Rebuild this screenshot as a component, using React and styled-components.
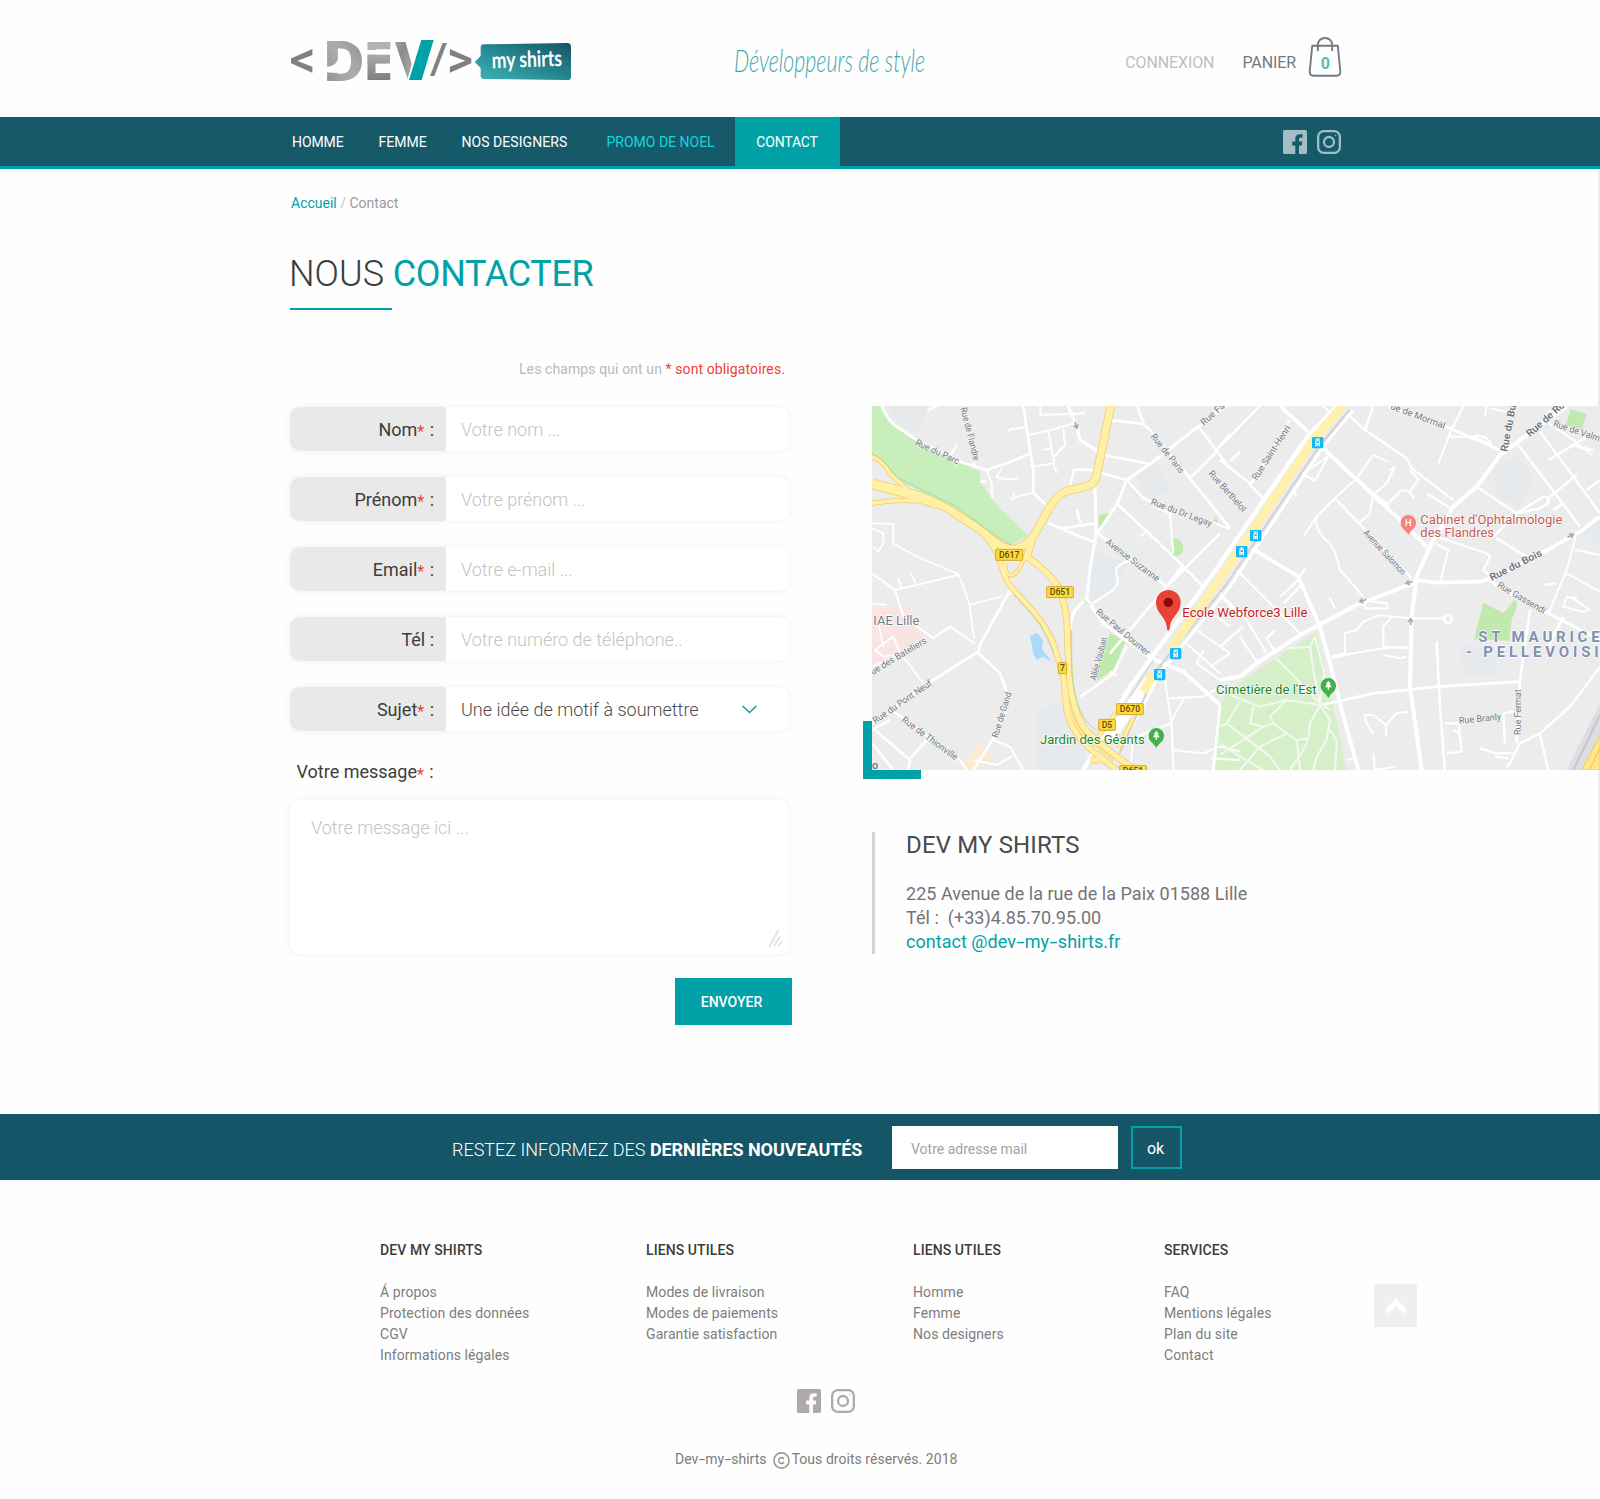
import React from "react";
import styled, { createGlobalStyle } from "styled-components";

const teal = "#00a2a7";
const navy = "#165a6a";

const GlobalStyle = createGlobalStyle`
  *, *::before { box-sizing: border-box; }
  body {
    margin: 0;
    background: #fefefe;
    font-family: Roboto, "Liberation Sans", sans-serif;
    font-size: 14px;
    line-height: 21px;
    color: #3c3c3c;
  }
  a { color: inherit; text-decoration: none; }
  h1, h2, h3, p, ul, figure { margin: 0; padding: 0; font-weight: 400; }
  ul { list-style: none; }
  svg { display: block; }
`;

const Page = styled.div`
  width: 1600px;
  min-height: 1499px;
  overflow: hidden;
`;

/* ---------- header ---------- */

const Header = styled.header`
  display: flex;
  align-items: flex-start;
  height: 117px;
  padding: 36px 258px 0 290px;
`;

const LogoDrawing = styled.svg`
  overflow: visible;
`;

const Slogan = styled.svg`
  margin-left: 158px;
  overflow: visible;
`;

const Account = styled.div`
  display: flex;
  margin-left: auto;
  font-size: 16px;
  line-height: 24px;
  color: #77787b;
`;

const AccountLink = styled.a`
  margin: 15px ${(p) => p.$gap}px 0 0;
  letter-spacing: -0.1px;
  color: ${(p) => (p.$muted ? "#bfbfbf" : "#77787b")};
`;

/* ---------- navigation ---------- */

const Nav = styled.nav`
  display: flex;
  justify-content: space-between;
  height: 52px;
  padding: 0 259px 0 290px;
  background: ${navy};
  border-bottom: 3px solid ${teal};
`;

const Menu = styled.div`
  display: grid;
  grid-template-columns: 86.5px 83px 145px 130.5px 105px;
`;

const MenuLink = styled.a`
  display: flex;
  align-items: center;
  justify-content: ${(p) => (p.$active ? "center" : "flex-start")};
  padding: 1px ${(p) => (p.$active ? 1 : 0)}px 0 ${(p) => (p.$active ? 0 : 2)}px;
  letter-spacing: ${(p) => p.$spacing || 0}px;
  color: ${(p) => (p.$promo ? "#12d6dc" : "#ffffff")};
  background: ${(p) => (p.$active ? teal : "transparent")};
`;

const Social = styled.div`
  display: flex;
  align-items: center;
  gap: 10px;
  color: ${(p) => p.$color};
`;

/* ---------- main ---------- */

const Main = styled.main`
  height: 945px;
  padding: 24px 0 0 290px;
  box-shadow: inset -2px 0 #ebebeb;
`;

const Breadcrumb = styled.div`
  padding-left: 1px;
  color: #999999;
  a { color: ${teal}; }
  span { color: #c4c4c4; }
`;

const Title = styled.h1`
  margin: 39px 0 0 -1px;
  font-size: 36px;
  line-height: 42px;
  font-weight: 300;
  color: #3c3c3c;
  strong {
    font-weight: 400;
    letter-spacing: -0.35px;
    color: ${teal};
  }
`;

const Rule = styled.div`
  width: 102px;
  height: 2px;
  margin-top: 13px;
  background: ${teal};
`;

const Columns = styled.div`
  display: grid;
  grid-template-columns: 502px 737px;
  column-gap: 71px;
`;

const Form = styled.form`
  display: flex;
  flex-direction: column;
  padding-top: 49px;
`;

const Note = styled.p`
  padding-right: 7px;
  margin-bottom: 27px;
  text-align: right;
  letter-spacing: 0.1px;
  color: #b9b9b9;
  em { font-style: normal; color: #ee4035; }
`;

const Fields = styled.div`
  display: grid;
  row-gap: 26px;
  width: 499px;
`;

const Field = styled.div`
  display: flex;
  height: 44px;
  border-radius: 10px;
  overflow: hidden;
  background: #ffffff;
  box-shadow: 0 0 6px rgba(0, 0, 0, 0.07);
`;

const Label = styled.label`
  display: flex;
  align-items: center;
  justify-content: flex-end;
  width: 156px;
  padding: 0 12px 0 0;
  font-size: 18px;
  white-space: pre;
  background: #e9e9e9;
`;

const Star = styled.span`
  position: relative;
  top: 2px;
  margin-right: 1px;
  font-size: 16px;
  color: #ee4035;
`;

const Input = styled.input`
  flex: 1;
  min-width: 0;
  border: 0;
  outline: 0;
  padding: 0 0 0 15px;
  background: transparent;
  font: 300 18px Roboto, sans-serif;
  &::placeholder { color: #c3c3c3; opacity: 1; }
`;

const Select = styled.div`
  display: flex;
  flex: 1;
  align-items: center;
  justify-content: space-between;
  padding: 0 32px 0 15px;
  font-size: 18px;
  font-weight: 300;
  color: #4c4c4c;
`;

const MessageLabel = styled.label`
  margin: 29px 0 15px 6.5px;
  font-size: 18px;
  line-height: 24px;
`;

const MessageBox = styled.div`
  display: flex;
  justify-content: space-between;
  align-items: flex-end;
  width: 499px;
  height: 154px;
  padding: 0 6px 6px 0;
  border-radius: 10px;
  background: #ffffff;
  box-shadow: 0 0 6px rgba(0, 0, 0, 0.07);
`;

const Textarea = styled.textarea`
  width: 440px;
  height: 148px;
  border: 0;
  outline: 0;
  resize: none;
  overflow: hidden;
  padding: 16px 0 0 21px;
  background: transparent;
  font: 300 18px/24px Roboto, sans-serif;
  &::placeholder { color: #c3c3c3; opacity: 1; }
`;

const Submit = styled.button`
  align-self: flex-end;
  width: 117px;
  height: 47px;
  margin-top: 24px;
  padding: 1px 4px 0 0;
  border: 0;
  background: ${teal};
  color: #ffffff;
  font: 500 14px Roboto, sans-serif;
`;

const MapFrame = styled.figure`
  position: relative;
  width: 728px;
  height: 364px;
  margin: 96px 0 0 9px;
  &::before {
    content: "";
    position: absolute;
    left: -9px;
    bottom: -9px;
    width: 58px;
    height: 58px;
    border: solid ${teal};
    border-width: 0 0 9px 9px;
  }
`;

const Address = styled.address`
  height: 122px;
  margin: 62px 0 0 9px;
  padding-left: 31px;
  border-left: 3px solid #d4d4d4;
  font-style: normal;
  font-size: 18px;
  line-height: 24px;
  letter-spacing: 0.03px;
  color: #747474;
  white-space: pre;
  a { color: ${teal}; }
`;

const AddressName = styled.h2`
  && { margin-bottom: 24px; }
  font-size: 24px;
  line-height: 26px;
  letter-spacing: 0.15px;
  color: #4a4a4a;
`;

const Dash = styled.span`
  display: inline-block;
  margin: 0 0.105em;
  transform: scaleX(1.6);
`;

/* ---------- newsletter ---------- */

const Newsletter = styled.section`
  display: flex;
  align-items: center;
  height: 66px;
  padding-left: 452px;
  background: #145667;
  color: #ffffff;
`;

const NewsletterText = styled.p`
  width: 440px;
  padding-top: 5px;
  font-size: 18px;
  line-height: 24px;
  font-weight: 300;
  strong { font-weight: 700; letter-spacing: -0.06px; }
`;

const MailInput = styled.input`
  width: 226px;
  height: 43px;
  margin: 1px 13px 0 0;
  padding: 3px 0 0 19px;
  border: 0;
  background: #ffffff;
  font: 400 14px Roboto, sans-serif;
  &::placeholder { color: #a3a3a3; opacity: 1; }
`;

const OkButton = styled.button`
  width: 51px;
  height: 43px;
  margin-top: 1px;
  padding: 1px 2px 0 0;
  border: 2px solid ${teal};
  background: transparent;
  color: #ffffff;
  font: 400 16px Roboto, sans-serif;
`;

/* ---------- footer ---------- */

const Footer = styled.footer`
  padding-top: 60px;
  color: #7d7d7d;
`;

const FooterColumns = styled.div`
  display: grid;
  grid-template-columns: 266px 267px 251px 210px 43px;
  height: 126px;
  padding-left: 380px;
  letter-spacing: 0.09px;
`;

const FooterHeading = styled.h3`
  && { margin-bottom: 21px; }
  font-size: 14px;
  line-height: 21px;
  && { font-weight: 500; }
  color: #3c3c3c;
`;

const TopButton = styled.button`
  display: grid;
  place-items: center;
  width: 43px;
  height: 43px;
  margin-top: 44px;
  padding: 0;
  border: 0;
  background: #efefef;
`;

const FooterSocial = styled.div`
  display: flex;
  margin: 23px 0 0 797px;
`;

const Copyright = styled.p`
  && { margin: 36px 0 0 675px; }
  display: flex;
  align-items: center;
  letter-spacing: 0.04px;
  svg { margin: 2px 2px 0 6px; }
`;

/* ---------- icons ---------- */

const FacebookIcon = () => (
  <svg width="24" height="24" viewBox="0 0 24 24" fill="currentColor">
    <path d="M1.5 0H22.5A1.5 1.5 0 0 1 24 1.5V22.5A1.5 1.5 0 0 1 22.500 24H16V15.4H18.8L19.3 11.4H16V9.400C16 8.300 16.500 7.800 17.700 7.800H19.6V4.300H16.800C13.600 4.300 12.300 6.100 12.300 8.900V11.4H9.200V15.4H12.300V24H1.5A1.5 1.5 0 0 1 0 22.500V1.5A1.5 1.5 0 0 1 1.5 0Z" />
  </svg>
);

const InstagramIcon = () => (
  <svg width="24" height="24" viewBox="0 0 24 24" fill="none" stroke="currentColor" strokeWidth="2.3">
    <rect x="1.15" y="1.15" width="21.7" height="21.7" rx="5.6" />
    <circle cx="12" cy="12" r="5" />
    <circle cx="18.6" cy="5.5" r="0.8" fill="currentColor" stroke="none" />
  </svg>
);

const BagIcon = () => (
  <svg width="34" height="42" viewBox="0 0 34 42" fill="none" stroke="#77787b" strokeWidth="1.9">
    <path d="M4.2 9.8H29.8L32.3 35.5Q32.4 39.8 28.6 39.8H5.4Q1.6 39.8 1.7 35.5Z" strokeLinejoin="round" />
    <path d="M9.8 15V9.5C9.8 -0.6 24.2 -0.6 24.2 9.5V15" />
    <text x="17.3" y="33" textAnchor="middle" fontFamily="Roboto" fontWeight="700" fontSize="16" fill="#4fbfbf" stroke="none">0</text>
  </svg>
);

const Logo = () => (
  <LogoDrawing width="282" height="48" viewBox="60 48 846 144" fontFamily="Roboto">
    <defs>
      <linearGradient id="metal" x1="1" y1="0" x2="0" y2="1">
        <stop offset="0" stopColor="#8c8c8c" />
        <stop offset="0.5" stopColor="#adadad" />
        <stop offset="1" stopColor="#8c8c8c" />
      </linearGradient>
      <linearGradient id="metalE" gradientUnits="userSpaceOnUse" x1="0" y1="65" x2="0" y2="180">
        <stop offset="0.2" stopColor="#b2b2b2" />
        <stop offset="1" stopColor="#808080" />
      </linearGradient>
      <linearGradient id="metalV" x1="0" y1="0" x2="0.6" y2="0.3">
        <stop offset="0" stopColor="#b0b0b0" />
        <stop offset="0.5" stopColor="#8a8a8a" />
        <stop offset="1" stopColor="#a5a5a5" />
      </linearGradient>
      <linearGradient id="tag" x1="0" y1="1" x2="1" y2="0">
        <stop offset="0" stopColor="#3eb4b8" />
        <stop offset="0.5" stopColor="#278791" />
        <stop offset="1" stopColor="#145466" />
      </linearGradient>
    </defs>
    <text x="58.5" y="171" fontSize="156" fontWeight="500" fill="#808080" textLength="79" lengthAdjust="spacingAndGlyphs">&lt;</text>
    <text x="161" y="182" fontSize="167" fontWeight="900" fill="url(#metal)" textLength="121" lengthAdjust="spacingAndGlyphs">D</text>
    <path d="M206 92V108Q203 139 166 141V157L214 160V92Z" fill="#fefefe" />
    <text x="285" y="180" fontSize="162" fontWeight="900" fill="url(#metalE)" textLength="78" lengthAdjust="spacingAndGlyphs">E</text>
    <rect x="288" y="90" width="76" height="14" fill="#fefefe" />
    <rect x="293" y="104" width="67" height="27" fill="url(#metalE)" />
    <rect x="320" y="131" width="46" height="26" fill="#fefefe" />
    <text x="375" y="180" fontSize="162" fontWeight="900" fill="url(#metalV)" textLength="110" lengthAdjust="spacingAndGlyphs">V</text>
    <path d="M448 55H500V185H410Z" fill="#fefefe" />
    <path d="M454 60H491L455 180H417Z" fill={teal} />
    <text x="480" y="160" fontSize="127" fontWeight="500" fill="#808080" textLength="53" lengthAdjust="spacingAndGlyphs">/</text>
    <text x="530" y="171" fontSize="156" fontWeight="500" fill="#808080" textLength="79" lengthAdjust="spacingAndGlyphs">&gt;</text>
    <path d="M642 73L892 69Q903 69 903 80V170Q903 180 893 180L642 177Q632 177 632 168V144L614 126L632 108V83Q632 73 642 73Z" fill="url(#tag)" />
    <text x="666" y="145" fontFamily="Lato" fontSize="67" fontWeight="700" fill="#ffffff" textLength="211" lengthAdjust="spacingAndGlyphs" transform="rotate(-2 666 145)">my shirts</text>
  </LogoDrawing>
);

/* ---------- map ---------- */

const E = 1110; // horizontal offset of the eastern half of the plan

const WestRoads = [
  ["M95 48Q115 95 140 110L200 150L330 215L410 240L470 220L530 195L545 190", 9],
  ["M232 62L275 40M345 48L352 60M300 200L320 165M370 215L378 235", 8],
  ["M410 240L425 280L428 325M390 275H410", 7],
  ["M520 48L535 150L550 240V310L595 350", 9],
  ["M535 135L595 122L672 100M570 48L572 75L705 70M475 125L480 118L525 112", 7],
  ["M655 48L680 110L690 150L745 185", 11],
  ["M595 125L608 190L612 215M640 112L645 165L612 200M580 180L608 175M540 232L610 220L620 250", 7],
  ["M455 235L440 262L470 268L505 265M545 310L500 320L485 330L492 310", 6],
  ["M780 90L880 102L905 125L1040 290L1140 415", 9],
  ["M862 48L882 102M760 195L900 222M660 290L672 238L720 240L830 270", 8],
  ["M1140 40L1045 110L900 222L830 270L800 345L742 430", 10],
  ["M1045 110L1140 235M1095 185L1140 130M1020 265L1100 185", 8],
  ["M735 290L738 430L720 540L710 625", 10],
  ["M830 270L880 325L905 335", 8],
  ["M805 345L960 490L1065 595", 9],
  ["M905 345L960 370L970 490M1085 395L1140 418", 7],
  ["M595 400L740 460M630 415L735 400M680 360L692 400", 9],
  ["M742 430L770 450L950 590L1110 430M995 530L950 590L780 790", 9],
  ["M870 440L885 428", 7],
  ["M728 640L790 600Q810 580 800 550Q790 530 835 512", 7],
  ["M660 720Q660 660 710 628L760 700L905 805", 11],
  ["M750 880L690 920M780 845L800 858M830 770L790 850L750 880", 8],
  ["M66 400L130 402V460L200 500L325 552L358 640L372 745", 6],
  ["M66 550L135 600L160 680L250 745L300 710L375 760", 7],
  ["M135 600L325 555M145 565L155 595M180 545L198 580M358 645L460 618", 6],
  ["M480 600L390 765L385 790L450 850L468 900L470 960L430 1045L370 1140", 9],
  ["M490 600L478 570M470 610L495 605", 15],
  ["M385 785L250 870L66 1000", 9],
  ["M160 800L220 880M66 830L160 790L220 750", 6],
  ["M75 1020L180 1110L175 1140M66 1060L130 1140M130 965L160 985L330 1110L350 1140M180 1105L240 1040", 8],
  ["M430 1050L480 1070L520 1140M370 1110L440 1125L485 1100M120 990L66 1020", 7],
  ["M66 415L100 430V460L85 485L70 470M75 780L95 765L130 740L150 790L100 800Z", 6],
  ["M66 640L110 645M85 700L100 770", 6],
  ["M905 805L1000 845L1110 945", 13],
  ["M940 840L965 1000L970 1140M965 1000L850 1045L840 1140M960 925L1060 920L1110 890", 7],
  ["M970 1080L1060 1090L1110 1070L1170 1085M1005 920L960 1000M1170 1110L1080 1105", 6],
  ["M1110 945L1090 1140", 10],
  ["M1010 760L1110 850M1040 720L1140 790M1060 780L1040 820L1110 870M1080 830L1140 790", 7],
  ["M1075 660L1140 710M1110 615L1170 680", 7]
];

const EastRoads = [
  ["M180 48L280 140L320 185L545 395L620 470", 13],
  ["M380 70L435 120L560 205L575 235L700 330M310 48L350 85M460 48L435 120", 8],
  ["M0 170L120 48M210 90L150 190L90 285L135 330M0 210L90 280M30 215L60 185", 8],
  ["M330 190L285 272L245 250M220 290L228 320M250 250L330 195", 7],
  ["M345 325L410 265L460 195L505 215M410 265L460 310L505 345M345 325L575 565M460 310L450 370L415 400", 7],
  ["M250 440L290 380L345 325M290 380Q280 420 330 460Q350 490 360 540L430 620", 7],
  ["M510 240L525 230L500 280L465 310M500 345L545 300L570 305L595 270L570 240M570 305L582 325M620 310L700 360", 7],
  ["M505 50L690 115L840 180", 9],
  ["M730 48L690 130L655 220M690 140L760 140L815 165M755 150L770 135L800 145L815 160M800 48L795 80M810 55L860 65", 7],
  ["M1040 48L840 195L770 290L700 350L635 460L590 560L575 680L570 890L605 1140", 14],
  ["M590 570L650 578L780 575L830 560L1000 470L1080 425L1140 380", 13],
  ["M895 165L990 290L1080 410M960 125L1060 260L1140 370M985 210L1060 165L1110 180M1060 165L1100 140M1070 255L990 320L980 340M1100 300L1140 270", 8],
  ["M770 290L890 370L970 320Q990 320 985 340L960 355L890 370L820 440M1000 360L1030 340M830 445L920 500", 8],
  ["M980 95L1060 150L1115 195M990 60L970 85M1050 165L1120 180", 6],
  ["M645 460L685 480L660 580M650 440L800 490L810 500L790 540L820 570", 7],
  ["M1070 430L1040 540L985 670M1040 550L1140 605M1065 480L1140 495M970 585L1010 580M1060 625L1110 660L1090 665L1030 650L1040 620L1070 625", 7],
  ["M810 570L850 600L1140 750M1030 680L980 780", 10],
  ["M930 660L900 870L890 1060M895 875L655 890L460 910L305 945", 9],
  ["M0 870L60 860L110 820L240 735L400 650L590 575", 14],
  ["M95 475L235 560L300 710L330 820L365 960L415 1140", 13],
  ["M255 535L240 560M50 540L240 730M235 570L180 620M250 580L190 640M0 610L80 690L140 790M60 740L110 815M0 770L70 710M165 720L140 745L165 785", 7],
  ["M430 625L435 655H505L500 640L460 635M460 640L455 620M330 625L345 655", 7],
  ["M335 800L375 790V730L410 720L430 695L480 675L515 680L575 685L670 685M515 680L490 710V770L560 775M335 805L400 790L490 775L565 770M490 795L540 805L560 800", 7],
  ["M655 755L650 760L660 950L675 1140M675 1000H715L725 1085L680 1090M700 1020L720 1030", 8],
  ["M565 965L530 970L498 1005V1040M498 1005L460 975L435 975L440 1000L460 1030M380 1110L400 1105M460 1090L465 1140L525 1130", 7],
  ["M1140 830L1050 950L960 1030L900 1060L870 1120L860 1130M960 1035L985 1140M780 1075L830 1090L880 1090M850 970L855 1060M825 1100L865 1105M850 970L880 965", 8]
];

const CemeteryPaths =
  "M170 805L300 940L330 960M200 775L270 770L285 740M270 770L280 840L300 940M285 740L320 880M310 860L300 940M30 915L120 950L200 930L300 945M60 935L20 1000L0 1010M100 950L90 1000L130 1010L160 1000L200 1030L230 1050L265 1045L270 1000L300 945M130 1010L0 1095M20 1000L150 1100L180 1140M200 1030L120 1070L60 1140M230 1050L240 1140M265 1045L250 1080L210 1140M300 945L330 990L320 1050L290 1100L280 1140M330 1020L350 1050L345 1140M160 1000L150 980L200 930M0 1060L60 1100L130 1140";

const Highways = [
  ["M66 200Q100 210 120 250L190 315", 16],
  ["M66 340Q150 325 220 335", 16],
  ["M400 430Q445 480 460 545Q470 580 500 610Q580 690 610 760L640 860L650 960Q665 1030 730 1085L800 1140", 19],
  ["M465 520Q465 560 490 555Q510 540 530 490", 13],
  ["M530 500Q590 540 625 590Q655 660 652 750L660 880Q670 960 700 1010Q740 1060 850 1135", 21],
  ["M66 278L170 305Q240 325 300 360L400 425Q450 475 490 478Q530 470 555 430L600 350Q630 305 660 300L715 288Q738 280 743 240L783 44", 26],
  ["M66 285L170 312L260 345", 26],
  ["M545 450L530 505", 24],
  ["M745 1040L800 965M850 985L805 1075", 14],
  ["M645 860L660 960Q680 1030 740 1070L790 1110", 9],
  ["M720 1110H750", 20]
];

const StreetNames = [
  ["Rue du Parc", 194, 164, 322, 224],
  ["Rue de Flandre", 331, 55, 371, 213],
  ["Rue de Paris", 901, 140, 990, 252],
  ["Rue Berthelot", 1074, 252, 1178, 368],
  ["Rue du Dr Legay", 901, 343, 1082, 410],
  ["Avenue Suzanne", 765, 460, 920, 576],
  ["Rue Paul Doumer", 736, 668, 890, 798],
  ["Allée Vauban", 738, 872, 772, 745],
  ["Rue Fa", 1062, 108, 1126, 50],
  ["ue des Bateliers", 68, 855, 232, 757],
  ["Rue du Pont Neuf", 76, 1002, 248, 884],
  ["Rue de Thionville", 153, 993, 315, 1112],
  ["Rue de Gand", 443, 1045, 485, 910],
  ["Rue Saint-Henri", E + 110, 272, E + 213, 114],
  ["ue de Mormal", E + 510, 56, E + 672, 117],
  ["Rue de Valm", E + 998, 108, E + 1136, 155],
  ["Rue Gassendi", E + 830, 590, E + 970, 672],
  ["Avenue Salomon", E + 428, 430, E + 546, 557],
  ["Rue Branly", E + 718, 1001, E + 844, 989],
  ["Rue Fermat", E + 903, 1035, E + 903, 898],
  ["Rue du Bu", E + 862, 186, E + 888, 46, true],
  ["Rue de Ro", E + 930, 142, E + 1036, 48, true],
  ["Rue du Bois", E + 815, 573, E + 968, 496, true]
];

const StreetName = ({ text, x1, y1, x2, y2, major }) => {
  const angle = (Math.atan2(y2 - y1, x2 - x1) * 180) / Math.PI;
  return (
    <text
      x={x1}
      y={y1}
      transform={`rotate(${angle} ${x1} ${y1})`}
      textLength={Math.hypot(x2 - x1, y2 - y1)}
      lengthAdjust="spacingAndGlyphs"
      fontSize={major ? 30 : 28}
      fontWeight={major ? 500 : 400}
      fill={major ? "#646e74" : "#737a80"}
      stroke="#f6f6f6"
      strokeWidth="4"
      strokeLinejoin="round"
      paintOrder="stroke"
    >
      {text}
    </text>
  );
};

const Place = ({ x, y, w, color, children, size = 38, weight = 400, spacing }) => (
  <text
    x={x}
    y={y}
    textLength={w}
    lengthAdjust={spacing ? "spacing" : "spacingAndGlyphs"}
    fontSize={size}
    fontWeight={weight}
    fill={color}
    stroke="#ffffff"
    strokeWidth="4"
    strokeLinejoin="round"
    paintOrder="stroke"
  >
    {children}
  </text>
);

const RoadBadge = ({ x, y, w, children }) => (
  <g>
    <rect x={x} y={y} width={w} height="33" rx="2" fill="#fdd93a" stroke="#d3a82b" strokeWidth="3" />
    <text x={x + w / 2} y={y + 26} textAnchor="middle" fontSize="26" fontWeight="500" fill="#5a4a12">{children}</text>
  </g>
);

const TramStop = ({ x, y }) => (
  <g transform={`translate(${x} ${y})`}>
    <rect width="34" height="34" rx="4" fill="#12b8f6" />
    <path d="M10 6H24M17 6V11" stroke="#fff" strokeWidth="3" />
    <path d="M11 10H23Q25 18 24 26H10Q9 18 11 10ZM13.500 13V18H20.500V13ZM13 21V23.500H15.500V21ZM18.500 21V23.500H21V21Z" fill="#fff" fillRule="evenodd" />
    <path d="M11 29L13 26M23 29L21 26" stroke="#fff" strokeWidth="2.500" />
  </g>
);

const SmallPin = ({ x, y, color, children }) => (
  <g transform={`translate(${x} ${y})`}>
    <path d="M0 38C-3 24 -23 20 -23 0A23 23 0 0 1 23 0C23 20 3 24 0 38Z" fill={color} />
    {children}
  </g>
);

const tree = <path d="M0 -15L8 -4H4L10 5H2V12H-2V5H-10L-4 -4H-8Z" fill="#fff" />;

const Arrow = ({ x, y, angle }) => (
  <path d="M-11 0H8M-1 -7L9 0L-1 7" fill="none" stroke="#a4a9bd" strokeWidth="5" transform={`translate(${x} ${y}) rotate(${angle})`} />
);

const CityMap = () => (
  <svg width="728" height="364" viewBox="66 48 2184 1092" fontFamily="Roboto">
    <rect x="66" y="48" width="2184" height="1092" fill="#ececec" />
    <g fill="#e7eaed">
      <path d="M110 48H240L200 130L150 110Z" />
      <path d="M735 480L830 520L800 600L730 640L712 600Z" />
      <path d="M560 960L640 930L700 1060L720 1140H560Z" />
      <path d="M850 250L920 220L960 300L900 330Z" />
      <path d={`M${E + 820} 240L${E + 890} 190L${E + 940} 260L${E + 900} 350L${E + 830} 320Z`} />
      <path d={`M${E + 720} 760L${E + 830} 780L${E + 830} 860H${E + 730}Z`} />
      <path d={`M${E + 1070} 420L${E + 1140} 380V470Z`} />
    </g>
    <path d="M66 655L180 652L212 740L160 780L66 830Z" fill="#f9e3e3" />
    <path d="M325 1140L385 1062L428 1105L375 1140Z" fill="#fbecd0" />
    <path d="M66 48H95Q115 95 140 110L330 215L390 245V275L440 345L535 437L485 466L410 428L320 362L130 262Q95 205 66 192Z" fill="#c8eebb" />
    <path d="M540 738L560 728L580 750L575 775L605 815L580 800L560 810L550 790Z" fill="#a9d9fb" />
    <g fill="#c0eaad">
      <path d="M746 375L782 368L770 390L746 420Z" />
      <path d="M966 445Q998 440 1000 480Q990 505 966 495Z" />
      <path d="M780 730L826 755L790 840L740 872L745 820Z" />
      <path d="M1085 400L1098 380L1105 398Z" />
      <path d={`M${E + 790} 638L${E + 850} 670L${E + 885} 628L${E + 892} 645L${E + 875} 690L${E + 868} 752L${E + 762} 748Z`} />
      <path d={`M${E + 1052} 57L${E + 1100} 72L${E + 1085} 118L${E + 1037} 105Z`} />
    </g>
    <path d={`M${E + 290} 725L${E + 380} 1140H${E - 22}L${E - 12} 1000Q${E} 900 ${E + 70} 870L${E + 150} 815Z`} fill="#d5f0c9" />
    <g fill="none" stroke="#fff" strokeLinejoin="round">
      {WestRoads.map(([d, w]) => <path key={d} d={d} strokeWidth={w * 0.9} />)}
      <g transform={`translate(${E} 0)`}>
        {EastRoads.map(([d, w]) => <path key={d} d={d} strokeWidth={w * 0.9} />)}
        <path d={CemeteryPaths} strokeWidth="6" stroke="#f4f8f0" />
        <circle cx="684" cy="687" r="12" strokeWidth="7" />
      </g>
      <path d={`M${E + 355} 44L${E + 262} 140L${E - 20} 550L840 890L700 1140`} strokeWidth="13" />
      <path d={`M${E + 400} 60L${E + 310} 170L${E + 30} 590L930 850L820 1060`} strokeWidth="9" />
      <path d="M900 870L800 1010L770 1050" strokeWidth="34" />
    </g>
    <path d={`M${E + 388} 60L${E + 295} 172L${E + 18} 585L920 840L800 1110`} fill="none" stroke="#cfd1d6" strokeWidth="6" />
    <path d={`M${E + 370} 44L${E + 280} 150L${E} 566L960 780M910 850L880 905`} fill="none" stroke="#fff0ac" strokeWidth="26" />
    <g fill="none" strokeLinejoin="round">
      {Highways.map(([d, w]) => <path key={d} d={d} stroke="#f3cd72" strokeWidth={w} />)}
      {Highways.map(([d, w]) => <path key={d} d={d} stroke="#fff0a6" strokeWidth={w - 5} />)}
      <path d="M66 190Q110 215 140 262L320 350L410 418L485 466M490 612L570 700L612 790M665 720V850Q680 990 740 1020M840 920L910 810M700 630L720 645" stroke="#9ccf9f" strokeWidth="2" />
    </g>
    <path d={`M${E + 1140} 940L${E + 1040} 1140H${E + 1090}L${E + 1140} 1030Z`} fill="#dcdee1" />
    <path d={`M${E + 1140} 975L${E + 1060} 1140`} stroke="#c5c9cf" strokeWidth="7" />
    <path d={`M${E + 1140} 1035L${E + 1085} 1140H${E + 1140}Z`} fill="#ffe68a" stroke="#f1c96a" strokeWidth="3" />
    <path d={`M${E + 1140} 1075L${E + 1108} 1140`} stroke="#eebf55" strokeWidth="3" />

    {StreetNames.map(([text, x1, y1, x2, y2, major]) => (
      <StreetName key={text} {...{ text, x1, y1, x2, y2, major }} />
    ))}

    <RoadBadge x={437} y={478} w={81}>D617</RoadBadge>
    <RoadBadge x={590} y={590} w={80}>D651</RoadBadge>
    <RoadBadge x={625} y={818} w={25}>7</RoadBadge>
    <RoadBadge x={800} y={941} w={80}>D670</RoadBadge>
    <RoadBadge x={746} y={988} w={50}>D5</RoadBadge>
    <RoadBadge x={809} y={1127} w={80}>D651</RoadBadge>

    <TramStop x={960} y={774} />
    <TramStop x={912} y={837} />
    <TramStop x={E + 276} y={141} />
    <TramStop x={E + 90} y={420} />
    <TramStop x={E + 48} y={468} />

    <Arrow x={678} y={106} angle={75} />
    <Arrow x={E + 1052} y={437} angle={-30} />
    <Arrow x={E + 567} y={578} angle={165} />
    <Arrow x={E + 428} y={632} angle={160} />
    <Arrow x={E + 572} y={695} angle={-90} />

    <Place x={70} y={704} w={138} color="#6b7a88">IAE Lille</Place>
    <Place x={570} y={1062} w={314} color="#1b8424">Jardin des Géants</Place>
    <Place x={1098} y={911} w={302} color="#1b8424">Cimetière de l'Est</Place>
    <Place x={997} y={680} w={375} color="#c3201d">Ecole Webforce3 Lille</Place>
    <Place x={E + 601} y={401} w={426} color="#c5595b">Cabinet d'Ophtalmologie</Place>
    <Place x={E + 601} y={440} w={221} color="#c5595b">des Flandres</Place>
    <Place x={E + 775} y={757} w={364} color="#8190ae" size={45} weight={700} spacing>ST MAURICE</Place>
    <Place x={E + 738} y={802} w={398} color="#8190ae" size={45} weight={700} spacing>- PELLEVOISI</Place>
    <text x="66" y="1138" fontSize="32" fontWeight="500" fill="#697379">o</text>

    <SmallPin x={919} y={1037} color="#43b049">{tree}</SmallPin>
    <SmallPin x={E + 325} y={887} color="#43b049">{tree}</SmallPin>
    <SmallPin x={E + 565} y={398} color="#f88180">
      <text y="10" textAnchor="middle" fontSize="28" fontWeight="500" fill="#fff">H</text>
    </SmallPin>
    <path d="M955 722C951 722 951 715 950 708C945 678 918 670 918 637A37 37 0 0 1 992 637C992 670 965 678 960 708C959 715 959 722 955 722Z" fill="#ea4335" />
    <circle cx="955" cy="637" r="14" fill="#8b0a0a" />
  </svg>
);

/* ---------- page ---------- */

const fields = [
  ["Nom", true, "Votre nom ..."],
  ["Prénom", true, "Votre prénom ..."],
  ["Email", true, "Votre e-mail ..."],
  ["Tél", false, "Votre numéro de téléphone.."]
];

const footerLinks = [
  ["DEV MY SHIRTS", ["Á propos", "Protection des données", "CGV", "Informations légales"]],
  ["LIENS UTILES", ["Modes de livraison", "Modes de paiements", "Garantie satisfaction"]],
  ["LIENS UTILES", ["Homme", "Femme", "Nos designers"]],
  ["SERVICES", ["FAQ", "Mentions légales", "Plan du site", "Contact"]]
];

export default function App() {
  return (
    <Page>
      <GlobalStyle />
      <Header>
        <Logo />
        <Slogan width="200" height="56" viewBox="0 0 200 56">
          <text x="4" y="35.5" fontFamily="Lato" fontStyle="italic" fontWeight="300" fontSize="32" fill="#3fa9ad" textLength="191" lengthAdjust="spacingAndGlyphs">
            Développeurs de style
          </text>
        </Slogan>
        <Account>
          <AccountLink href="#" $muted $gap={28}>CONNEXION</AccountLink>
          <AccountLink href="#" $gap={12}>PANIER</AccountLink>
          <BagIcon />
        </Account>
      </Header>

      <Nav>
        <Menu>
          <MenuLink href="#" $spacing={-0.1}>HOMME</MenuLink>
          <MenuLink href="#">FEMME</MenuLink>
          <MenuLink href="#" $spacing={0.05}>NOS DESIGNERS</MenuLink>
          <MenuLink href="#" $promo>PROMO DE NOEL</MenuLink>
          <MenuLink href="#" $active $spacing={-0.2}>CONTACT</MenuLink>
        </Menu>
        <Social $color="#a2bdc4">
          <FacebookIcon />
          <InstagramIcon />
        </Social>
      </Nav>

      <Main>
        <Breadcrumb><a href="#">Accueil</a> <span>/</span> Contact</Breadcrumb>
        <Title>NOUS <strong>CONTACTER</strong></Title>
        <Rule />
        <Columns>
          <Form>
            <Note>Les champs qui ont un <em>* sont obligatoires.</em></Note>
            <Fields>
              {fields.map(([name, required, hint]) => (
                <Field key={name}>
                  <Label>{name}{required && <Star>*</Star>} :</Label>
                  <Input placeholder={hint} />
                </Field>
              ))}
              <Field>
                <Label>Sujet<Star>*</Star> :</Label>
                <Select>
                  Une idée de motif à soumettre
                  <svg width="15" height="9" viewBox="0 0 15 9" fill="none" stroke={teal} strokeWidth="1.4">
                    <path d="M0.600 1L7.500 7.600L14.400 1" />
                  </svg>
                </Select>
              </Field>
            </Fields>
            <MessageLabel>Votre message<Star>*</Star> :</MessageLabel>
            <MessageBox>
              <Textarea placeholder="Votre message ici ..." />
              <svg width="16" height="19" viewBox="0 0 16 19" stroke="#e3e3e3" strokeWidth="2" fill="none">
                <path d="M2.200 17.800L11.500 1M7 17L13 7.500M11.500 17L15 12.500" />
              </svg>
            </MessageBox>
            <Submit type="button">ENVOYER</Submit>
          </Form>
          <div>
            <MapFrame><CityMap /></MapFrame>
            <Address>
              <AddressName>DEV MY SHIRTS</AddressName>
              <p>225 Avenue de la rue de la Paix 01588 Lille</p>
              <p>{"Tél :  (+33)4.85.70.95.00"}</p>
              <p><a href="#">contact @dev<Dash>-</Dash>my<Dash>-</Dash>shirts.fr</a></p>
            </Address>
          </div>
        </Columns>
      </Main>

      <Newsletter>
        <NewsletterText>RESTEZ INFORMEZ DES <strong>DERNIÈRES NOUVEAUTÉS</strong></NewsletterText>
        <MailInput placeholder="Votre adresse mail" />
        <OkButton>ok</OkButton>
      </Newsletter>

      <Footer>
        <FooterColumns>
          {footerLinks.map(([heading, links], i) => (
            <div key={i}>
              <FooterHeading>{heading}</FooterHeading>
              <ul>
                {links.map((link) => <li key={link}><a href="#">{link}</a></li>)}
              </ul>
            </div>
          ))}
          <TopButton aria-label="Haut de page">
            <svg width="22" height="16" viewBox="0 0 22 16" fill="none" stroke="#ffffff" strokeWidth="5">
              <path d="M1.800 14L11 4L20.200 14" />
            </svg>
          </TopButton>
        </FooterColumns>
        <FooterSocial>
          <Social $color="#aeaaab">
            <FacebookIcon />
            <InstagramIcon />
          </Social>
        </FooterSocial>
        <Copyright>
          Dev<Dash>-</Dash>my<Dash>-</Dash>shirts
          <svg width="17" height="17" viewBox="0 0 17 17" fill="none" stroke="#9b9b9b" strokeWidth="1.6">
            <circle cx="8.500" cy="8.500" r="7.600" />
            <path d="M11 7A2.900 2.900 0 1 0 11 10" />
          </svg>
          Tous droits réservés. 2018
        </Copyright>
      </Footer>
    </Page>
  );
}
